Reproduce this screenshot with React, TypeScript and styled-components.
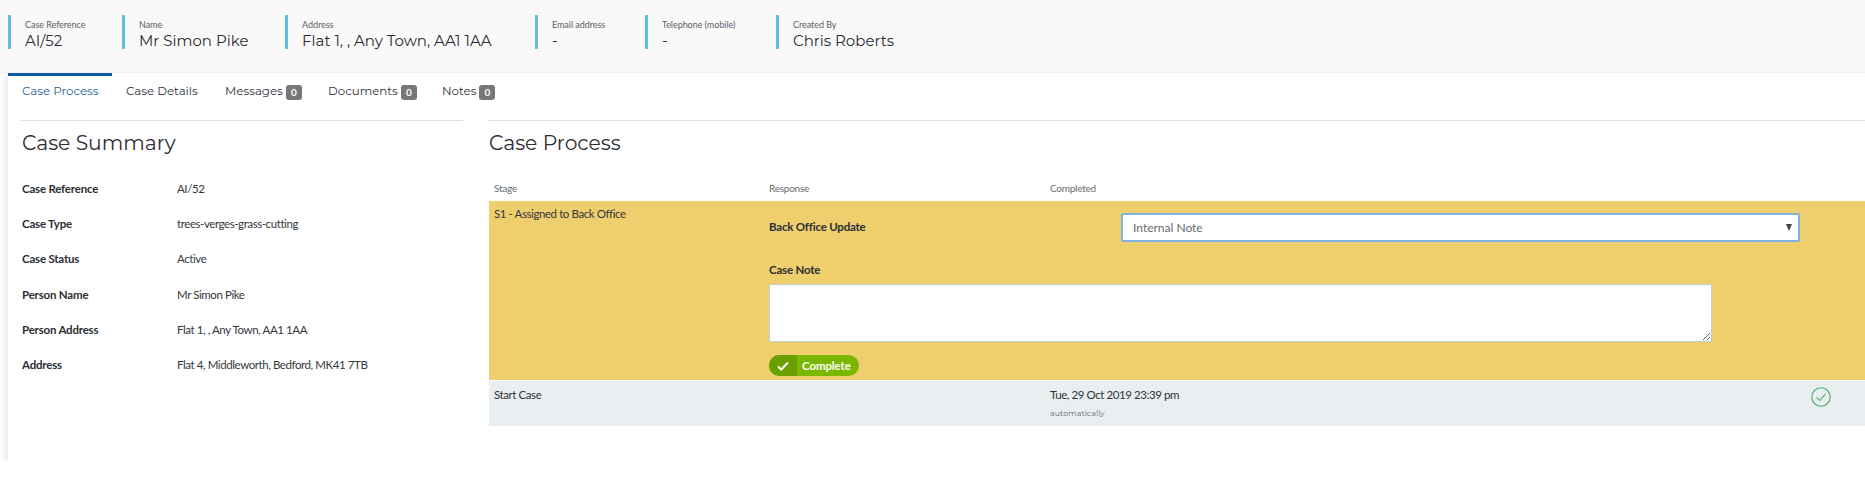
import React from "react";
import styled, { createGlobalStyle } from "styled-components";

const body = `"Lato", "Noto Sans", sans-serif`;
const heading = `"Montserrat", "Inter", sans-serif`;

const Global = createGlobalStyle`
  html, body { margin: 0; padding: 0; background: #fff; }
  body { font-family: ${body}; color: #2b2b2b; overflow: hidden; }
  * { box-sizing: border-box; }
`;

const Page = styled.div`
  width: 1865px;
  height: 483px;
  background: #fff;
`;

const Header = styled.header`
  height: 73px;
  background: #f9f9f9;
  padding: 15px 0 0 8px;
  display: flex;
  align-items: flex-start;
  border-bottom: 1px solid #f2f2f2;
`;

const HeaderItem = styled.div<{ $w: number }>`
  flex: 0 0 ${(p) => p.$w}px;
  height: 34px;
  border-left: 3px solid #62c0de;
  padding: 4px 0 0 14px;
`;

const HeaderLabel = styled.div`
  font-size: 9px;
  letter-spacing: -0.05px;
  line-height: 11px;
  color: #5b6066;
  white-space: nowrap;
`;

const HeaderValue = styled.div`
  font-family: ${heading};
  font-size: 15px;
  line-height: 18px;
  margin-top: 2px;
  color: #2b2b33;
  white-space: nowrap;
`;

const Card = styled.main`
  margin-left: 8px;
  height: 388px;
  background: #fff;
  box-shadow: -3px 0 6px rgba(0, 0, 0, 0.09);
  clip-path: inset(0 0 0 -10px);
`;

const Tabs = styled.nav`
  display: flex;
  height: 47px;
`;

const Tab = styled.div<{ $w: number; $active?: boolean }>`
  flex: 0 0 ${(p) => p.$w}px;
  padding: ${(p) => (p.$active ? "9px" : "12px")} 0 0 14px;
  border-top: ${(p) => (p.$active ? "3px solid #0a5aa5" : "none")};
  font-family: ${heading};
  font-size: 11.8px;
  line-height: 13px;
  color: ${(p) => (p.$active ? "#1f5f96" : "#2f333b")};
  white-space: nowrap;
  display: flex;
  align-items: flex-start;
  gap: 3px;
`;

const Badge = styled.span`
  display: inline-block;
  width: 16px;
  height: 15px;
  background: #777;
  color: #fff;
  border-radius: 3px;
  font-size: 10px;
  font-weight: 700;
  line-height: 15px;
  text-align: center;
  font-family: ${body};
`;

const Columns = styled.div`
  display: flex;
  align-items: flex-start;
`;

const LeftCol = styled.section`
  flex: 0 0 442px;
  margin-left: 13px;
  border-top: 1px solid #e0e0e0;
`;

const RightCol = styled.section`
  flex: 1;
  margin-left: 25px;
  border-top: 1px solid #e0e0e0;
`;

const Title = styled.h2`
  margin: 0;
  padding: 10px 0 0 1px;
  height: 43px;
  font-family: ${heading};
  font-weight: 400;
  font-size: 20.3px;
  line-height: 24px;
  color: #2e2e33;
`;

const Summary = styled.div`
  padding-top: 17px;
`;

const SummaryRow = styled.div`
  display: flex;
  height: 35.2px;
  line-height: 16px;
  padding-left: 1px;
`;

const SummaryKey = styled.div`
  flex: 0 0 155px;
  font-weight: 700;
  font-size: 11.5px;
  letter-spacing: -0.2px;
  color: #2b2f36;
`;

const BodyText = `
  font-size: 11.5px;
  letter-spacing: -0.42px;
`;

const SummaryVal = styled.div`
  ${BodyText}
  color: #33373e;
`;

const HeadRow = styled.div`
  display: flex;
  height: 38px;
  padding-top: 18px;
  margin-top: -1px;
  font-size: 10px;
  letter-spacing: -0.25px;
  line-height: 14px;
  color: #666b70;
`;

const HeadCell = styled.div<{ $w: number }>`
  flex: 0 0 ${(p) => p.$w}px;
  padding-left: 6px;
`;

const ActiveRow = styled.div`
  display: flex;
  height: 180px;
  margin-left: 1px;
  background: #efce6d;
  border-bottom: 1px solid #fff;
`;

const StageCell = styled.div`
  ${BodyText}
  flex: 0 0 280px;
  padding: 5px 0 0 5px;
  line-height: 16px;
  color: #33373e;
`;

const FormCell = styled.div`
  flex: 1;
  padding-top: 12px;
`;

const SelectRow = styled.div`
  display: flex;
  align-items: center;
  height: 29px;
`;

const FieldLabel = styled.div`
  flex: 0 0 352px;
  font-weight: 700;
  font-size: 11.5px;
  letter-spacing: -0.2px;
  color: #2b2f36;
  line-height: 16px;
`;

const UpdateLabel = styled(FieldLabel)`
  padding-bottom: 2px;
  height: 18px;
`;

const Select = styled.div`
  position: relative;
  width: 679px;
  height: 29px;
  background: #fff;
  border: 2px solid #7db2e0;
  border-radius: 2px;
  padding: 0 0 0 10px;
  display: flex;
  align-items: center;
  color: #666b70;
  font-size: 12px;
`;

const Caret = styled.span`
  position: absolute;
  right: 6px;
  top: 9px;
  width: 0;
  height: 0;
  border-left: 3.5px solid transparent;
  border-right: 3.5px solid transparent;
  border-top: 7px solid #3d4650;
`;

const NoteLabel = styled(FieldLabel)`
  margin-top: 20px;
`;

const NoteArea = styled.textarea`
  display: block;
  width: 943px;
  height: 58px;
  margin-top: 6px;
  padding: 0;
  background: #fff;
  border: 1px solid #c3cdd6;
  border-radius: 0;
  outline: none;
`;

const CompleteButton = styled.button`
  display: flex;
  align-items: stretch;
  margin-top: 13px;
  width: 90px;
  height: 21px;
  padding: 0;
  border: none;
  border-radius: 11px;
  overflow: hidden;
  background: #7ab800;
  color: #fff;
  font-family: ${body};
  font-weight: 700;
  font-size: 11.5px;
  letter-spacing: -0.1px;
`;

const ButtonIcon = styled.span`
  flex: 0 0 28px;
  background: #6a9f00;
  display: flex;
  align-items: center;
  justify-content: center;
`;

const ButtonText = styled.span`
  padding-left: 5px;
  line-height: 21px;
`;

const DoneRow = styled.div`
  display: flex;
  height: 45px;
  margin-left: 1px;
  background: #e9eef0;
  line-height: 16px;
  color: #2f333a;
`;

const DoneStage = styled.div`
  ${BodyText}
  flex: 0 0 561px;
  padding: 6px 0 0 5px;
`;

const DoneWhen = styled.div`
  ${BodyText}
  flex: 0 0 761px;
  padding: 6px 0 0 0;
`;

const Auto = styled.div`
  font-size: 8px;
  letter-spacing: 0;
  line-height: 10px;
  margin-top: 5px;
  color: #666b70;
  font-family: ${heading};
`;

const DoneIcon = styled.div`
  padding-top: 6px;
`;

const rows = [
  ["Case Reference", "AI/52"],
  ["Case Type", "trees-verges-grass-cutting"],
  ["Case Status", "Active"],
  ["Person Name", "Mr Simon Pike"],
  ["Person Address", "Flat 1, , Any Town, AA1 1AA"],
  ["Address", "Flat 4, Middleworth, Bedford, MK41 7TB"],
];

const info = [
  { w: 114, l: "Case Reference", v: "AI/52" },
  { w: 163, l: "Name", v: "Mr Simon Pike" },
  { w: 250, l: "Address", v: "Flat 1, , Any Town, AA1 1AA" },
  { w: 110, l: "Email address", v: "-" },
  { w: 131, l: "Telephone (mobile)", v: "-" },
  { w: 200, l: "Created By", v: "Chris Roberts" },
];

export default function App() {
  return (
    <Page>
      <Global />
      <Header>
        {info.map((i) => (
          <HeaderItem key={i.l} $w={i.w}>
            <HeaderLabel>{i.l}</HeaderLabel>
            <HeaderValue>{i.v}</HeaderValue>
          </HeaderItem>
        ))}
      </Header>
      <Card>
        <Tabs>
          <Tab $w={104} $active>Case Process</Tab>
          <Tab $w={99}>Case Details</Tab>
          <Tab $w={103}>Messages <Badge>0</Badge></Tab>
          <Tab $w={114}>Documents <Badge>0</Badge></Tab>
          <Tab $w={100}>Notes <Badge>0</Badge></Tab>
        </Tabs>
        <Columns>
          <LeftCol>
            <Title>Case Summary</Title>
            <Summary>
              {rows.map(([k, v]) => (
                <SummaryRow key={k}>
                  <SummaryKey>{k}</SummaryKey>
                  <SummaryVal>{v}</SummaryVal>
                </SummaryRow>
              ))}
            </Summary>
          </LeftCol>
          <RightCol>
            <Title>Case Process</Title>
            <HeadRow>
              <HeadCell $w={275}>Stage</HeadCell>
              <HeadCell $w={281}>Response</HeadCell>
              <HeadCell $w={300}>Completed</HeadCell>
            </HeadRow>
            <ActiveRow>
              <StageCell>S1 - Assigned to Back Office</StageCell>
              <FormCell>
                <SelectRow>
                  <UpdateLabel>Back Office Update</UpdateLabel>
                  <Select>
                    Internal Note
                    <Caret />
                  </Select>
                </SelectRow>
                <NoteLabel>Case Note</NoteLabel>
                <NoteArea />
                <CompleteButton type="button">
                  <ButtonIcon>
                    <svg width="12" height="10" viewBox="0 0 12 10" fill="none" stroke="#fff" strokeWidth="2">
                      <path d="M1 5.5 L4.2 8.5 L11 1.5" />
                    </svg>
                  </ButtonIcon>
                  <ButtonText>Complete</ButtonText>
                </CompleteButton>
              </FormCell>
            </ActiveRow>
            <DoneRow>
              <DoneStage>Start Case</DoneStage>
              <DoneWhen>
                Tue, 29 Oct 2019 23:39 pm
                <Auto>automatically</Auto>
              </DoneWhen>
              <DoneIcon>
                <svg width="20" height="20" viewBox="0 0 20 20" fill="none" stroke="#4fae6a">
                  <circle cx="10" cy="10" r="9.2" strokeWidth="1.1" />
                  <path d="M5.5 10.5 L8.8 13.5 L14.5 6.8" strokeWidth="1.1" />
                </svg>
              </DoneIcon>
            </DoneRow>
          </RightCol>
        </Columns>
      </Card>
    </Page>
  );
}
